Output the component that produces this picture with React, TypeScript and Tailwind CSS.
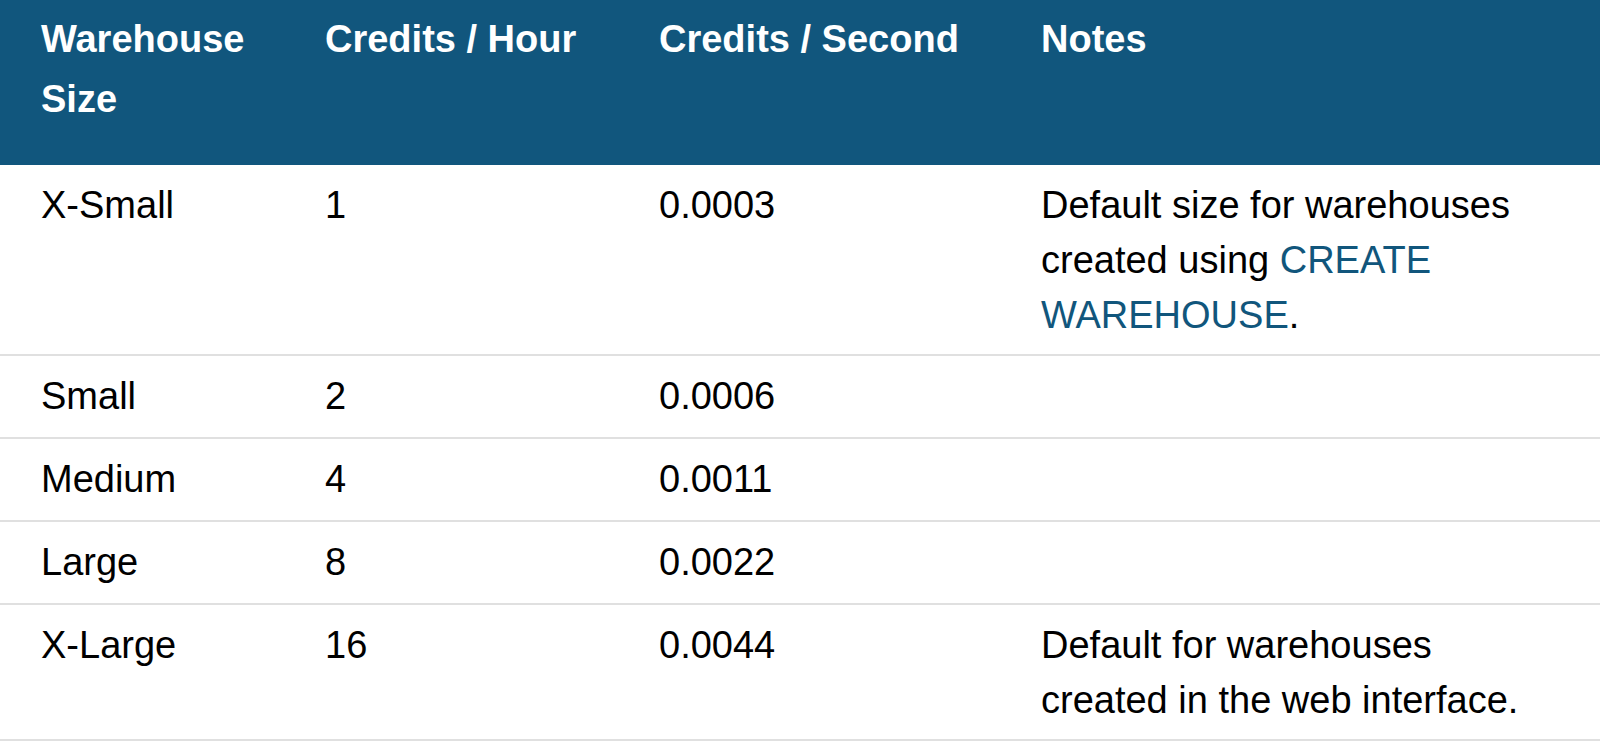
const rows: { size: string; hour: string; second: string; notes?: React.ReactNode }[] = [
  {
    size: "X-Small",
    hour: "1",
    second: "0.0003",
    notes: (
      <>
        Default size for warehouses created using{" "}
        <a href="#" className="text-[#11567c]">
          CREATE WAREHOUSE
        </a>
        .
      </>
    ),
  },
  { size: "Small", hour: "2", second: "0.0006" },
  { size: "Medium", hour: "4", second: "0.0011" },
  { size: "Large", hour: "8", second: "0.0022" },
  {
    size: "X-Large",
    hour: "16",
    second: "0.0044",
    notes: "Default for warehouses created in the web interface.",
  },
];

const GRID = "grid grid-cols-[285px_334px_382px_1fr]";

export default function App() {
  return (
    <div className="w-[1600px] h-[741px] overflow-hidden bg-white font-['Liberation_Sans',Arial,sans-serif] text-[38px] text-black">
      {/* Header */}
      <div className={`${GRID} h-[165px] bg-[#11567d] pt-[9px] font-bold leading-[60px] text-white`}>
        <div className="pl-[41px] pr-4">Warehouse Size</div>
        <div className="pl-[40px]">Credits / Hour</div>
        <div className="pl-[40px]">Credits / Second</div>
        <div className="pl-[40px]">Notes</div>
      </div>

      {/* Body */}
      {rows.map((r, i) => (
        <div
          key={r.size}
          className={`${GRID} border-b-2 border-[#e0e0e0] pt-[13px] leading-[55px] ${
            i === 0 || i === rows.length - 1 ? "pb-[11px]" : "pb-[13px]"
          }`}
        >
          <div className="pl-[41px]">{r.size}</div>
          <div className="pl-[40px]">{r.hour}</div>
          <div className="pl-[40px]">{r.second}</div>
          <div className="pl-[40px] pr-[60px]">{r.notes}</div>
        </div>
      ))}
    </div>
  );
}
